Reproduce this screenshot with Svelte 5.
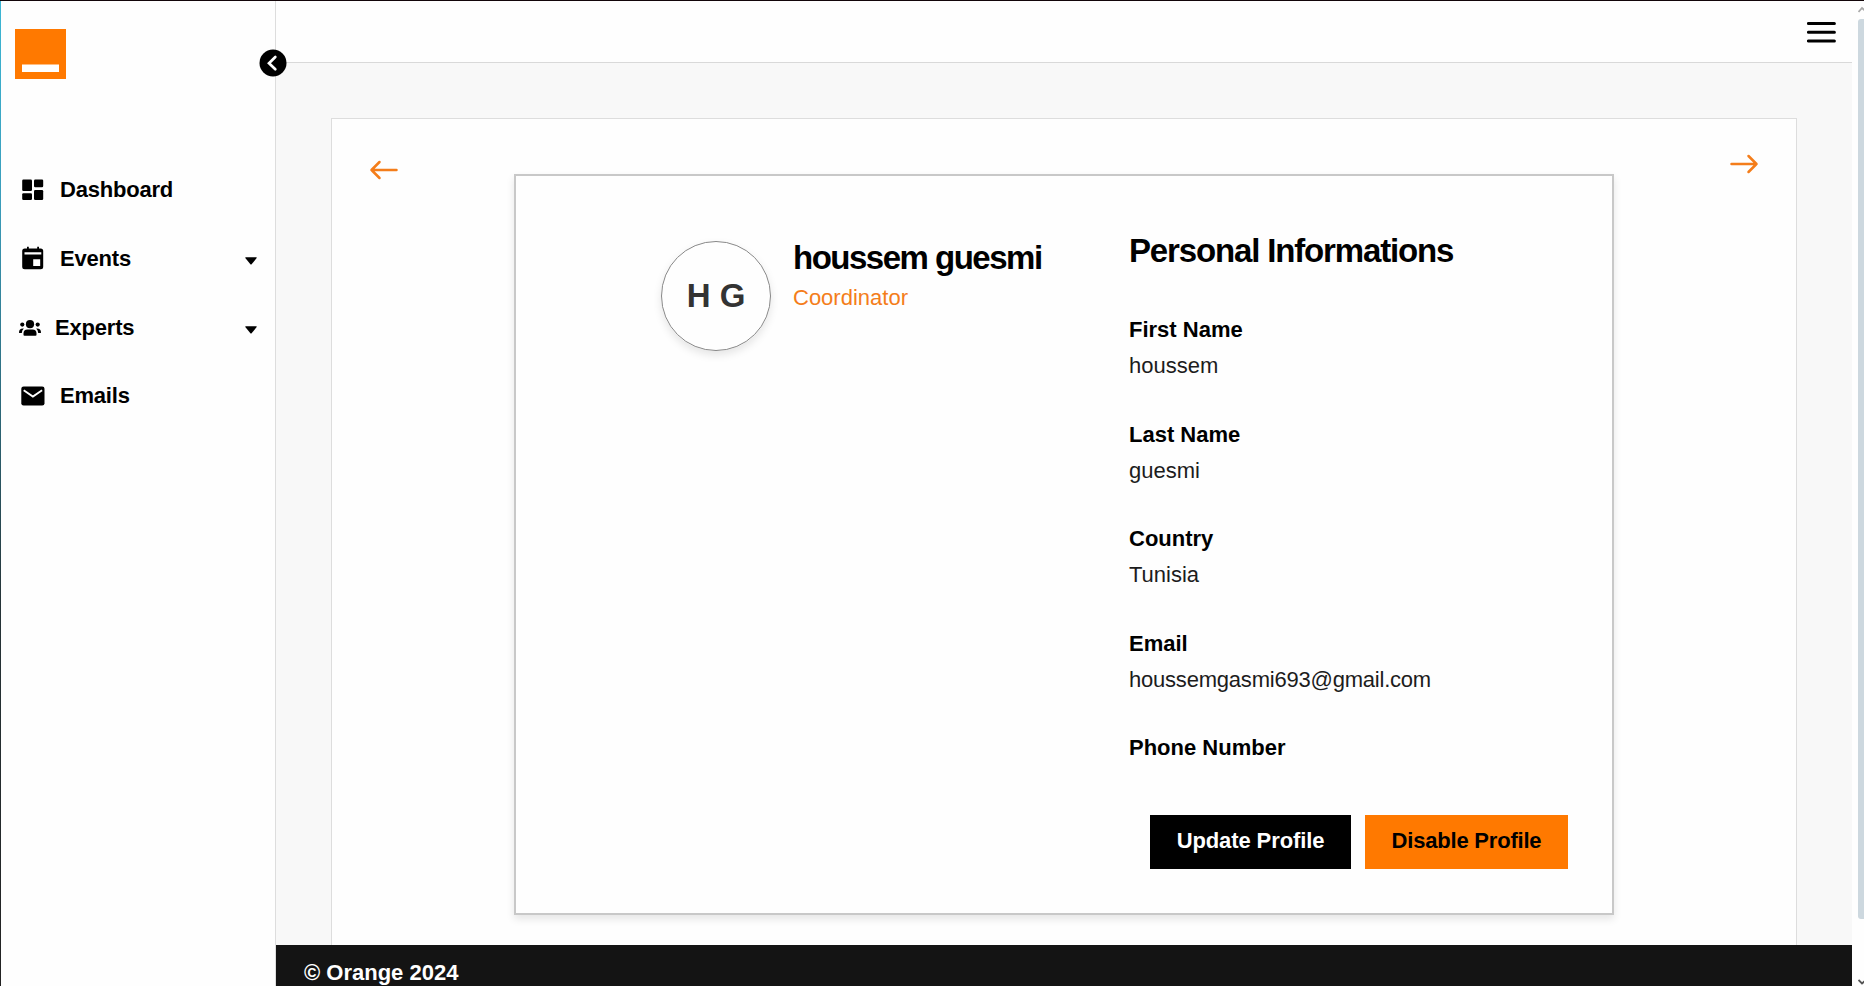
<script>
  const nav = [
    { label: 'Dashboard', icon: 'dashboard' },
    { label: 'Events', icon: 'calendar', menu: true },
    { label: 'Experts', icon: 'people', menu: true },
    { label: 'Emails', icon: 'mail' }
  ];
  const fields = [
    ['First Name', 'houssem'],
    ['Last Name', 'guesmi'],
    ['Country', 'Tunisia'],
    ['Email', 'houssemgasmi693@gmail.com'],
    ['Phone Number', '']
  ];
</script>

<div class="app">
  <aside>
    <svg class="logo" width="51" height="50" viewBox="0 0 51 50">
      <rect width="51" height="50" fill="#ff7900" />
      <rect x="7" y="35.5" width="37" height="7.5" fill="#fff" />
    </svg>
    <nav>
      {#each nav as item}
        <a class:tight={item.icon === 'people'} class:parent={item.menu}>
          {#if item.icon === 'dashboard'}
            <svg width="24" height="24" viewBox="0 0 24 24">
              <rect x="1.2" y="1.5" width="9.8" height="11.5" rx="1.2" />
              <rect x="1.2" y="15.3" width="9.8" height="6.7" rx="1.2" />
              <rect x="13" y="1.5" width="9.2" height="7.7" rx="1.2" />
              <rect x="13" y="12" width="9.2" height="10" rx="1.2" />
            </svg>
          {:else if item.icon === 'calendar'}
            <svg width="24" height="24" viewBox="0 0 24 24">
              <path fill-rule="evenodd" d="M6 .7h1.8v1.8h8.4V.7H18v1.8h1.7q2.5 0 2.5 2.5v15.7q0 2.5-2.5 2.5H3.7q-2.5 0-2.5-2.5V5q0-2.500 2.500-2.500H6zM3.500 6.200v2.200h16.800V6.200zM12.200 13.300v6.700h7v-6.700z" />
            </svg>
          {:else if item.icon === 'people'}
            <svg width="22" height="24" viewBox="0 0 22 24">
              <circle cx="11" cy="8.200" r="4.100" />
              <circle cx="3.300" cy="8.600" r="2.100" />
              <circle cx="18.700" cy="8.600" r="2.100" />
              <path d="M4.500 19v-1.800Q4.500 13.400 8.500 13.400h5q4 0 4 3.800V19q0 .8-1 .8h-11q-1 0-1-.8zM0 16.500q0-4.400 4.800-4-1.900 1.600-2 4.500H.8q-.8 0-.8-.5zM22 16.500q0-4.400-4.800-4 1.900 1.600 2 4.500h2q.8 0 .8-.5z" />
            </svg>
          {:else}
            <svg width="24" height="24" viewBox="0 0 24 24">
              <rect x=".3" y="2.500" width="23.200" height="19" rx="2.300" />
              <path d="M2.700 6.200l9.200 6.300 9.200-6.300" fill="none" stroke="#fefefe" stroke-width="1.900" />
            </svg>
          {/if}
          <span>{item.label}</span>
          {#if item.menu}
            <svg class="caret" width="12" height="8" viewBox="0 0 12 8"><path d="M.7.300h10.600q.8.200.2 1L6.600 7.200q-.6.600-1.200 0L.5 1.300Q-.1.500.7.300z" /></svg>
          {/if}
        </a>
      {/each}
    </nav>
    <svg class="collapse" width="28" height="28" viewBox="0 0 28 28">
      <circle cx="14" cy="14" r="13.500" />
      <path d="M16.300 8L10 14.200l6.300 6.100" fill="none" stroke="#fff" stroke-width="2.700" stroke-linecap="round" />
    </svg>
  </aside>

  <div class="page">
    <header>
      <svg width="30" height="24" viewBox="0 0 30 24">
        <path d="M1.400 3.500h26M1.400 12.300h26M1.400 21h26" stroke="#000" stroke-width="3" stroke-linecap="round" />
      </svg>
    </header>
    <main>
      <section class="panel">
        <svg class="back" width="30" height="22" viewBox="0 0 30 22">
          <path d="M28.500 11H3.500M11.500 3l-8 8 8 8" fill="none" stroke="#f47d1a" stroke-width="2.500" stroke-linecap="round" stroke-linejoin="round" />
        </svg>
        <article>
          <div class="person">
            <div class="avatar">H G</div>
            <div>
              <h1>houssem guesmi</h1>
              <p class="role">Coordinator</p>
            </div>
          </div>
          <div class="info">
            <h2>Personal Informations</h2>
            <dl>
              {#each fields as [label, value]}
                <div>
                  <dt>{label}</dt>
                  <dd class:long={value.length > 20}>{value}</dd>
                </div>
              {/each}
            </dl>
            <div class="actions">
              <button class="update">Update Profile</button>
              <button class="disable">Disable Profile</button>
            </div>
          </div>
        </article>
        <svg class="next" width="30" height="22" viewBox="0 0 30 22">
          <path d="M1.500 11h25M18.500 3l8 8-8 8" fill="none" stroke="#f47d1a" stroke-width="2.500" stroke-linecap="round" stroke-linejoin="round" />
        </svg>
      </section>
    </main>
    <footer>© Orange 2024</footer>
  </div>

  <div class="scroll">
    <svg width="8" height="7" viewBox="0 0 8 7"><path d="M.5 6L4 2l4 3.500" fill="none" stroke="#aaa" stroke-width="1.800" /></svg>
    <div class="thumb"></div>
    <svg class="down" width="8" height="7" viewBox="0 0 8 7"><path d="M.5 1L4 4.500 8 1" fill="none" stroke="#555" stroke-width="1.800" /></svg>
  </div>
</div>

<style>
  :global(body) {
    margin: 0;
    background: #fefefe;
  }
  .app {
    box-sizing: border-box;
    width: 1864px;
    height: 986px;
    overflow: hidden;
    display: flex;
    border-top: 1px solid #120509;
    background: linear-gradient(#3cb6d4, #3a9dbb 200px, #2c6575 420px, #263438 600px, #222) 0 0 / 1px 100% no-repeat #fefefe;
    font: 22px/36px 'Liberation Sans', Arial, sans-serif;
    color: #000;
  }
  h1, h2, p, dl, dd {
    margin: 0;
  }
  aside {
    position: relative;
    flex: none;
    box-sizing: border-box;
    width: 276px;
    padding: 28px 18px 0 15px;
    border-right: 1px solid #ddd;
  }
  .logo {
    display: block;
  }
  nav {
    margin-top: 76.500px;
    padding-left: 6px;
  }
  nav a {
    display: flex;
    align-items: center;
    height: 68.600px;
    gap: 15px;
    font-weight: bold;
    letter-spacing: -0.200px;
  }
  nav .parent span {
    padding-top: 2px;
  }
  nav .tight {
    gap: 14px;
    margin-left: -2px;
  }
  nav .tight svg:first-child {
    margin-top: 3px;
  }
  nav svg {
    flex: none;
  }
  nav .caret {
    margin-left: auto;
    position: relative;
    top: 3px;
  }
  .collapse {
    position: absolute;
    z-index: 2;
    left: 259px;
    top: 48px;
  }
  .page {
    flex: none;
    width: 1576px;
    display: flex;
    flex-direction: column;
  }
  header {
    box-sizing: border-box;
    height: 62px;
    flex: none;
    padding: 19px 15px 0 0;
    text-align: right;
    line-height: 0;
    border-bottom: 1px solid #d9d9d9;
  }
  main {
    box-sizing: border-box;
    height: 882px;
    flex: none;
    padding: 55px 55px 0;
    background: #f8f8f8;
  }
  .panel {
    box-sizing: border-box;
    height: 100%;
    padding: 55px 36px 0;
    display: flex;
    justify-content: space-between;
    align-items: flex-start;
    border: 1px solid #ddd;
    border-bottom: 0;
    background: #fefefe;
  }
  .back {
    margin-top: -15px;
  }
  .next {
    margin-top: -21px;
  }
  article {
    box-sizing: border-box;
    width: 1100px;
    height: 741px;
    display: flex;
    padding: 55px 44px 44px 145px;
    border: 2px solid #c8c8c8;
    box-shadow: 0 4px 8px rgba(0, 0, 0, 0.1);
  }
  .person {
    flex: none;
    width: 468px;
    display: flex;
    align-items: flex-start;
    gap: 22px;
    padding-top: 7px;
  }
  .avatar {
    box-sizing: border-box;
    width: 110px;
    height: 110px;
    margin-top: 3px;
    display: flex;
    align-items: center;
    justify-content: center;
    border: 1px solid #888;
    border-radius: 50%;
    box-shadow: 0 4px 8px rgba(0, 0, 0, 0.1);
    color: #333;
    font-size: 33px;
    font-weight: bold;
  }
  h1, h2 {
    font-size: 33px;
    line-height: 40px;
    letter-spacing: -1.500px;
    white-space: nowrap;
  }
  h2 {
    letter-spacing: -1.150px;
  }
  .role {
    margin-top: 2px;
    color: #f47d1a;
  }
  .info {
    flex: 1;
  }
  dl {
    margin-top: 41px;
    display: grid;
    grid-auto-rows: 72px;
    row-gap: 32.500px;
  }
  dt {
    font-weight: bold;
  }
  dd {
    color: #1c1c1c;
  }
  .long {
    letter-spacing: -0.210px;
  }
  .actions {
    display: flex;
    justify-content: flex-end;
    gap: 14px;
    margin-top: 13px;
  }
  button {
    box-sizing: border-box;
    height: 54px;
    width: 201px;
    padding: 0 0 2px;
    border: 0;
    background: #000;
    color: #fff;
    font: bold 22px/36px 'Liberation Sans', Arial, sans-serif;
    letter-spacing: -0.100px;
  }
  .disable {
    width: 203px;
    background: #ff7900;
    color: #000;
    letter-spacing: -0.200px;
  }
  footer {
    flex: 1;
    padding: 10px 27px 0 28px;
    background: #141414;
    color: #fff;
    font-weight: bold;
  }
  .scroll {
    flex: 1;
    display: flex;
    flex-direction: column;
    padding: 5px 0 0 6px;
  }
  .scroll svg {
    flex: none;
  }
  .thumb {
    height: 902px;
    margin-top: 6px;
    border-radius: 3px 0 0 3px;
    background: #cdd8df;
  }
  .down {
    margin-top: 60px;
  }
</style>
